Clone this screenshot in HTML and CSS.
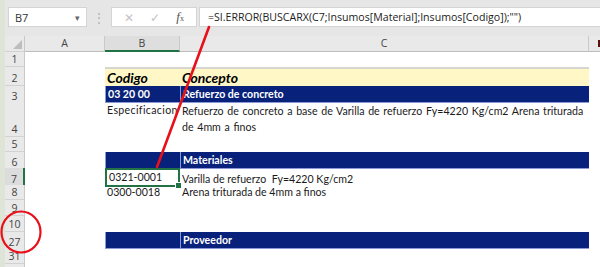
FILE: index.html
```html
<!DOCTYPE html>
<html lang="es">
<head>
    <meta charset="UTF-8">
    <meta name="viewport" content="width=device-width, initial-scale=1.0">
    <title>SI.ERROR BUSCARX</title>
    <link rel="stylesheet" href="styles.css">
</head>
<body>

    <div class="window">
        <!-- Formula bar -->
        <div class="formula-bar">
            <div class="name-box">
                <span>B7</span>
                <span class="caret">&#9662;</span>
            </div>
            <div class="grip">&#8942;</div>
            <div class="fx-buttons">
                <span class="fx-btn">&#10005;</span>
                <span class="fx-btn">&#10003;</span>
                <span class="fx-btn fx"><i>f</i><small>x</small></span>
            </div>
            <div class="formula-input">=SI.ERROR(BUSCARX(C7;Insumos[Material];Insumos[Codigo]);"")</div>
        </div>

        <!-- Sheet -->
        <div class="sheet">
            <div class="row head">
                <div class="rh corner"><span class="tri"></span></div>
                <div class="ch">A</div>
                <div class="ch sel">B</div>
                <div class="ch">C</div>
                <div class="ch last"><span class="mark"></span></div>
            </div>

            <div class="row r1">
                <div class="rh">1</div>
                <div class="c"></div><div class="c"></div><div class="c"></div><div class="c"></div>
            </div>
            <div class="row r2">
                <div class="rh">2</div>
                <div class="c"></div>
                <div class="c yellow title">Codigo</div>
                <div class="c yellow title">Concepto</div>
                <div class="c"></div>
            </div>
            <div class="row r3">
                <div class="rh">3</div>
                <div class="c"></div>
                <div class="c navy">03 20 00</div>
                <div class="c navy">Refuerzo de concreto</div>
                <div class="c"></div>
            </div>
            <div class="row r4">
                <div class="rh">4</div>
                <div class="c"></div>
                <div class="c top spec">Especificacion</div>
                <div class="c top wrap">Refuerzo de concreto a base de Varilla de refuerzo Fy=4220 Kg/cm2 Arena triturada de 4mm a finos</div>
                <div class="c"></div>
            </div>
            <div class="row r5">
                <div class="rh">5</div>
                <div class="c"></div><div class="c"></div><div class="c"></div><div class="c"></div>
            </div>
            <div class="row r6">
                <div class="rh">6</div>
                <div class="c"></div>
                <div class="c navy"></div>
                <div class="c navy">Materiales</div>
                <div class="c"></div>
            </div>
            <div class="row r7">
                <div class="rh sel">7</div>
                <div class="c"></div>
                <div class="c active">0321-0001<span class="handle"></span></div>
                <div class="c">Varilla de refuerzo&nbsp; Fy=4220 Kg/cm2</div>
                <div class="c"></div>
            </div>
            <div class="row r8">
                <div class="rh">8</div>
                <div class="c"></div>
                <div class="c">0300-0018</div>
                <div class="c">Arena triturada de 4mm a finos</div>
                <div class="c"></div>
            </div>
            <div class="row r9">
                <div class="rh">9</div>
                <div class="c"></div><div class="c"></div><div class="c"></div><div class="c"></div>
            </div>
            <div class="row r10">
                <div class="rh">10</div>
                <div class="c"></div><div class="c"></div><div class="c"></div><div class="c"></div>
            </div>
            <div class="row r27">
                <div class="rh">27</div>
                <div class="c"></div>
                <div class="c navy"></div>
                <div class="c navy">Proveedor</div>
                <div class="c"></div>
            </div>
            <div class="row r31">
                <div class="rh">31</div>
                <div class="c"></div><div class="c"></div><div class="c"></div><div class="c"></div>
            </div>
            <div class="row r32">
                <div class="rh"></div>
                <div class="c"></div><div class="c"></div><div class="c"></div><div class="c"></div>
            </div>
        </div>
    </div>

    <!-- red annotations drawn over the screenshot -->
    <svg class="marks" width="600" height="267" viewBox="0 0 600 267">
        <line x1="209" y1="27" x2="157" y2="167" stroke="#e8101a" stroke-width="2.6" stroke-linecap="round"/>
        <ellipse cx="21" cy="232" rx="19.5" ry="20.5" fill="none" stroke="#e8101a" stroke-width="2.2"/>
    </svg>

</body>
</html>
```

FILE: styles.css
```css
body {
    margin: 0;
    width: 600px;
    height: 267px;
    overflow: hidden;
    background: #dfe5d6;
    font-family: 'Lato', 'Open Sans', sans-serif;
    position: relative;
}
.window {
    margin-left: 5px;
    height: 267px;
    background: #e6e6e6;
}

/* Formula bar */
.formula-bar {
    display: flex;
    align-items: center;
    height: 36px;
    padding: 0 0 0 3px;
    box-sizing: border-box;
    padding-bottom: 5px;
    padding-top: 3px;
    font-family: 'Open Sans', sans-serif;
}
.name-box {
    width: 79px;
    height: 20px;
    box-sizing: border-box;
    background: #fff;
    border: 1px solid #d4d4d4;
    display: flex;
    align-items: center;
    justify-content: space-between;
    padding: 0 6px 0 6px;
    font-size: 11px;
    color: #333;
}
.caret {
    font-size: 9px;
    color: #666;
}
.grip {
    width: 24px;
    text-align: center;
    color: #b0b0b0;
    font-size: 12px;
}
.fx-buttons {
    width: 86px;
    height: 20px;
    box-sizing: border-box;
    background: #fff;
    border: 1px solid #d4d4d4;
    display: flex;
    align-items: center;
    justify-content: space-around;
    padding: 0 4px;
}
.fx-btn {
    color: #c4c4c4;
    font-size: 12px;
}
.fx-btn.fx {
    color: #555;
    font-family: 'Liberation Serif', serif;
    font-size: 13px;
}
.fx small {
    font-size: 8px;
}
.formula-input {
    flex: 1;
    height: 20px;
    box-sizing: border-box;
    background: #fff;
    border: 1px solid #d4d4d4;
    border-right: none;
    margin-left: 2px;
    padding: 0 0 0 8px;
    font-size: 10.6px;
    line-height: 18px;
    color: #222;
    white-space: nowrap;
}

/* Sheet grid */
.sheet {
    background: #fff;
}
.row {
    display: grid;
    grid-template-columns: 20px 80px 75px 409px 1fr;
}
.rh {
    background: #e9e9e9;
    border-right: 1px solid #c9c9c9;
    border-bottom: 1px solid #d2d2d2;
    box-sizing: border-box;
    font-family: 'Open Sans', sans-serif;
    font-size: 10.5px;
    color: #444;
    display: flex;
    align-items: flex-end;
    justify-content: center;
    line-height: 14px;
}
.rh.sel {
    background: #dcdcdc;
    border-right: 2px solid #217346;
}
.head {
    height: 15px;
}
.corner {
    position: relative;
}
.tri {
    position: absolute;
    right: 2px;
    bottom: 2px;
    border-left: 9px solid transparent;
    border-bottom: 9px solid #bdbdbd;
}
.ch {
    background: #e9e9e9;
    border-right: 1px solid #c9c9c9;
    border-bottom: 1px solid #bdbdbd;
    box-sizing: border-box;
    text-align: center;
    font-family: 'Open Sans', sans-serif;
    font-size: 10.5px;
    line-height: 14px;
    color: #444;
}
.ch.sel {
    background: #dedede;
    border-bottom: 2px solid #217346;
}
.ch.last {
    position: relative;
    border-right: none;
}
.mark {
    position: absolute;
    left: 9px;
    top: 4px;
    width: 4px;
    height: 7px;
    background: #5a1010;
}

.c {
    box-sizing: border-box;
    padding: 0 2px;
    font-size: 10.6px;
    color: #1a1a1a;
    white-space: nowrap;
    display: flex;
    align-items: flex-end;
    line-height: 15px;
    position: relative;
}
.c.top {
    align-items: flex-start;
    padding-top: 0;
}
.c.spec {
    letter-spacing: 0.35px;
}
.c.wrap {
    white-space: normal;
    word-spacing: 1px;
    line-height: 16px;
}
.c.yellow {
    background: #fff8c6;
    border-top: 2px solid #d6d6d0;
}
.c.title {
    font-weight: bold;
    font-style: italic;
    font-size: 14px;
    line-height: 17px;
    color: #000;
}
.c.navy {
    background: #08217a;
    color: #fff;
    font-weight: bold;
    border-bottom: 1px solid #8a9ad6;
    border-left: 1px solid #8a9ad6;
    line-height: 16px;
}
.c.active {
    border: 2px solid #217346;
    align-items: center;
}
.handle {
    position: absolute;
    right: -4px;
    bottom: -4px;
    width: 5px;
    height: 5px;
    background: #217346;
    border: 1px solid #fff;
}

.r1 { height: 16px; }
.r2 { height: 19px; }
.r3 { height: 17px; }
.r4 { height: 34px; }
.r5 { height: 15px; }
.r6 { height: 16px; }
.r7 { height: 17px; }
.r8 { height: 15px; }
.r9 { height: 16px; }
.r10 { height: 16px; }
.r27 { height: 16px; }
.r31 { height: 16px; }
.r32 { height: 10px; }

.r3 .navy, .r6 .navy, .r27 .navy {
    margin-bottom: 1px;
}

.marks {
    position: absolute;
    left: 0;
    top: 0;
    pointer-events: none;
}
```
